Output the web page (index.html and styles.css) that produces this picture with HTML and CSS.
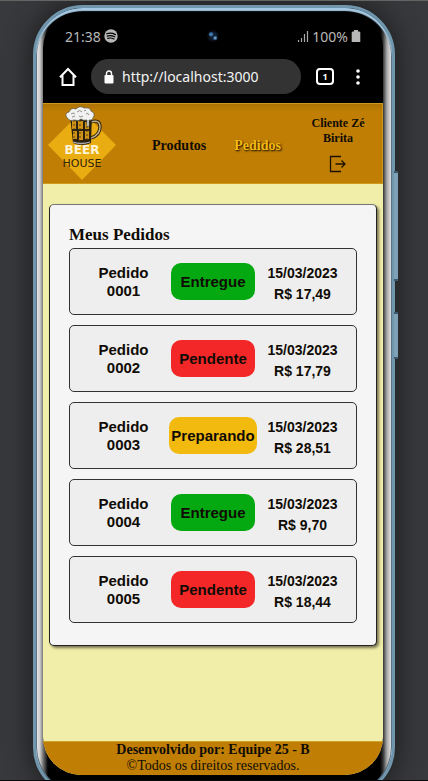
FILE: index.html
```html
<!DOCTYPE html>
<html lang="pt-BR">
<head>
<meta charset="utf-8">
<meta name="viewport" content="width=device-width, initial-scale=1">
<title>Beer House - Meus Pedidos</title>
<link rel="stylesheet" href="styles.css">
</head>
<body>
<div class="stage">
  <div class="phone">
    <span class="side-key volume"></span>
    <span class="side-key power"></span>
    <div class="screen">
      <div class="status">
        <span class="clock">21:38
          <svg width="14" height="14" viewBox="0 0 14 14"><circle cx="7" cy="7" r="6.7" fill="#b8b8b8"/><path d="M2.7 4.8Q7 3.3 11.5 5.6M3.2 7.1Q7 6 10.7 7.8M3.7 9.4Q7 8.4 10 10" fill="none" stroke="#000" stroke-width="1.2" stroke-linecap="round"/></svg>
        </span>
        <svg class="camera" width="14" height="14" viewBox="0 0 14 14"><circle cx="7" cy="7" r="6" fill="#080c12"/><circle cx="7" cy="7" r="4" fill="#102034"/><circle cx="5" cy="5.3" r="2" fill="#3f78ab"/><circle cx="9.2" cy="9" r="2" fill="#3a6d9c"/><circle cx="9" cy="9" r=".8" fill="#b0d0ee"/></svg>
        <span class="signal">
          <svg width="12" height="12" viewBox="0 0 12 12"><path d="M1.5 12V10M4.5 12V8M7.5 12V4M10.5 12V1" stroke="#aaa" stroke-width="1.2"/></svg>
          100%
          <svg width="10" height="12" viewBox="0 0 10 12"><path d="M3 0h4v1.5h1.5l.8.8V12H.7V2.3l.8-.8H3z" fill="#b8b8b8"/></svg>
        </span>
      </div>
      <div class="browser">
        <button class="tool" aria-label="Início"><svg width="18" height="20" viewBox="0 0 18 20"><path d="M1 10.2 9 2l8 8.2M3.5 8.5V18h11V8.5" fill="none" stroke="#fff" stroke-width="2"/></svg></button>
        <label class="address">
          <svg width="10" height="14" viewBox="0 0 10 14"><rect x=".5" y="5" width="9" height="8.5" rx="1" fill="#fff"/><path d="M2.5 6V3.5a2.5 2.5 0 0 1 5 0V6" fill="none" stroke="#fff" stroke-width="1.4"/></svg>
          <input type="text" aria-label="Endereço" value="http://localhost:3000">
        </label>
        <button class="tool tabs" aria-label="Abas">1</button>
        <button class="tool menu" aria-label="Menu"><svg width="6" height="18" viewBox="0 0 6 18"><g fill="#fff"><circle cx="3" cy="3" r="1.8"/><circle cx="3" cy="9" r="1.8"/><circle cx="3" cy="15" r="1.8"/></g></svg></button>
      </div>
      <div class="app">
        <header class="top">
          <svg class="logo" width="70" height="76" viewBox="0 0 70 76" role="img" aria-label="Beer House">
            <path d="M35 5 69 39 35 74 1 39z" fill="#e9ad12"/>
            <path d="M44 16q9-3 9 5t-9 11" fill="none" stroke="#33250f" stroke-width="3.4"/>
            <path d="M44 16q9-3 9 5t-9 11" fill="none" stroke="#c4b48c" stroke-width="1.4"/>
            <path d="M23 10h22l-1 27q-9 4-18 0z" fill="#2c210f"/>
            <path d="M25 15h4v8h-4zM31 15h5v8h-5zM38 16h4v7h-4zM26 25h4v8h-4zM32 25h4v9h-4zM38 25h4v8h-4z" fill="#cf9216"/>
            <path d="M27 14v20M33 14v21M40 16v18" stroke="#5b410e" stroke-width="1" stroke-dasharray="2 2"/>
            <path d="M26 36q8 3 17 0" fill="none" stroke="#aaa" stroke-width="1.3"/>
            <path d="M20 12q-3-5 2-6 2-5 7-3 4-4 8-1 6-1 7 3 5 2 2 7-1 3-4 2v6q-2 2-2-1v-5q-4 1-6-1-3 3-6 1-5 2-8-2z" fill="#f2f2f2" stroke="#55503f" stroke-width=".7"/>
            <path d="M24 8q2-2 4 0M30 6q3-3 5 0M32 10q2 2 4 0M39 8q2-2 3 1M25 11l3-1M37 5l2-1" fill="none" stroke="#77736a" stroke-width=".8"/>
            <text class="logo-beer" x="35" y="48" text-anchor="middle">BEER</text>
            <text class="logo-house" x="35" y="61" text-anchor="middle">HOUSE</text>
          </svg>
          <nav class="links">
            <a href="#produtos">Produtos</a>
            <a class="active" href="#pedidos">Pedidos</a>
          </nav>
          <div class="user">
            <span>Cliente Zé Birita</span>
            <button class="logout" aria-label="Sair"><svg width="18" height="18" viewBox="0 0 18 18"><path d="M12 1.500H1.500v15H12M6.500 9H16M12.500 5.500 16 9l-3.500 3.500" fill="none" stroke="#1c1200" stroke-width="1.300"/></svg></button>
          </div>
        </header>
        <main class="content">
          <section class="orders">
            <h1>Meus Pedidos</h1>
            <ul>
              <li><p class="number">Pedido 0001</p><span class="badge done">Entregue</span><p class="info">15/03/2023<br>R$ 17,49</p></li>
              <li><p class="number">Pedido 0002</p><span class="badge pending">Pendente</span><p class="info">15/03/2023<br>R$ 17,79</p></li>
              <li><p class="number">Pedido 0003</p><span class="badge preparing">Preparando</span><p class="info">15/03/2023<br>R$ 28,51</p></li>
              <li><p class="number">Pedido 0004</p><span class="badge done">Entregue</span><p class="info">15/03/2023<br>R$ 9,70</p></li>
              <li><p class="number">Pedido 0005</p><span class="badge pending">Pendente</span><p class="info">15/03/2023<br>R$ 18,44</p></li>
            </ul>
          </section>
        </main>
        <footer class="bottom"><strong>Desenvolvido por: Equipe 25 - B</strong><br>©Todos os direitos reservados.</footer>
      </div>
    </div>
  </div>
</div>
</body>
</html>
```
FILE: styles.css
```css
* {
  box-sizing: border-box;
}

body,
h1,
p,
ul {
  margin: 0;
  padding: 0;
}

button {
  padding: 0;
  border: 0;
  background: none;
  color: inherit;
}

svg {
  display: block;
  flex: none;
}

.stage {
  display: flex;
  flex-direction: column;
  min-height: 100vh;
  padding: 3px 33px 0;
  overflow: hidden;
  border-top: 1px solid #626561;
  border-bottom: 1px solid #090909;
  background: #38393c;
}

.phone {
  position: relative;
  display: flex;
  flex: 1;
  margin: 1px 0 -17px;
  padding: 4px 9px 19px 7px;
  border: 3px solid #7096ae;
  border-radius: 50px;
  background: linear-gradient(90deg, #eee, #ccc 4px, #777 7px, #000 12px, #000 calc(100% - 12px), #333 calc(100% - 9px), #aaa calc(100% - 5px), #eee);
  box-shadow: inset 0 3px 1px #a5c9e2, inset 0 0 0 1px #52697a, 0 0 24px 4px #202123;
}

.side-key {
  position: absolute;
  right: -6px;
  width: 4px;
  border: solid #3d596b;
  border-width: 2px 0;
  background: #7fa1b8;
}

.volume {
  top: 163px;
  height: 110px;
}

.power {
  top: 304px;
  height: 47px;
}

.screen {
  display: flex;
  flex: 1;
  flex-direction: column;
  min-width: 0;
  border-radius: 36px 36px 38px 38px;
  overflow: hidden;
  background: #000;
}

.status {
  display: grid;
  grid-template-columns: 1fr auto 1fr;
  align-items: center;
  height: 48px;
  padding: 0 22px;
  color: #b8b8b8;
  font: 14px "Noto Sans", sans-serif;
}

.clock,
.signal {
  display: flex;
  align-items: center;
  gap: 3px;
}

.signal {
  justify-content: flex-end;
}

.browser {
  display: flex;
  align-items: center;
  height: 43px;
  padding: 0 16px 10px;
  color: #fff;
}

.tool {
  display: grid;
  place-items: center;
  min-width: 18px;
}

.address {
  display: flex;
  flex: 1;
  align-items: center;
  gap: 8px;
  height: 35px;
  min-width: 0;
  margin: 0 15px 0 14px;
  padding: 0 13px;
  border-radius: 18px;
  background: #333;
}

.address input {
  flex: 1;
  min-width: 0;
  padding: 0;
  border: 0;
  outline: 0;
  background: none;
  color: #f4f4f4;
  font: 14px "Noto Sans", sans-serif;
}

.tabs {
  height: 17px;
  border: 2px solid #fff;
  border-radius: 4px;
  font: bold 9px "Noto Sans", sans-serif;
}

.menu {
  margin-left: 15px;
}

.app {
  display: flex;
  flex: 1;
  flex-direction: column;
  background: #f1eeaa;
  color: #100c05;
  font-family: "Liberation Serif", serif;
}

.top {
  display: flex;
  align-items: center;
  min-height: 81px;
  padding: 0 14px 0 4px;
  border: solid #cc9b1d;
  border-width: 1px 1px 1px 0;
  background: linear-gradient(#ae7303, #c07f04 8px);
}

.logo-beer {
  fill: #fff4d8;
  font: bold 12px "DejaVu Sans", sans-serif;
}

.logo-house {
  fill: #33230a;
  font: 11px "DejaVu Sans", sans-serif;
}

.links {
  display: flex;
  flex: 1;
  justify-content: center;
  gap: 28px;
  padding: 4px 0 0 8px;
  font-size: 14px;
  font-weight: bold;
}

.links a {
  color: inherit;
  text-decoration: none;
}

.links .active {
  color: #f2b90f;
  text-shadow: 1px 1px 2px #000;
}

.user {
  display: flex;
  flex-direction: column;
  align-items: center;
  gap: 9px;
  width: 60px;
  padding-top: 1px;
  font-size: 12px;
  font-weight: bold;
  line-height: 15px;
  text-align: center;
}

.content {
  flex: 1;
  padding: 20px 6px;
}

.orders {
  padding: 20px 19px 22px;
  border: 1px solid #222;
  border-top-color: #777;
  border-radius: 5px;
  background: #f5f5f5;
  box-shadow: 2px 2px 3px #77734f;
}

.orders h1 {
  margin-bottom: 3px;
  font-size: 17px;
  line-height: 20px;
}

.orders ul {
  display: grid;
  gap: 10px;
  list-style: none;
}

.orders li {
  display: grid;
  grid-template-columns: 1fr 88px 1fr;
  align-items: center;
  justify-items: center;
  min-height: 67px;
  padding: 0 8px;
  border: 1px solid #333;
  border-radius: 5px;
  background: #eee;
  font: bold 15px/18px "Liberation Sans", sans-serif;
  text-align: center;
}

.number {
  width: min-content;
}

.badge {
  min-width: 84px;
  padding: 10px 2px;
  border-radius: 10px;
  line-height: 17px;
}

.done {
  background: #04a810;
}

.pending {
  background: #f32727;
}

.preparing {
  background: #f2b90f;
}

.info {
  padding-top: 4px;
  font-size: 14px;
  line-height: 21px;
}

.bottom {
  padding-bottom: 1px;
  border-top: 1px solid #cfa02a;
  background: #c07f04;
  font-size: 14px;
  line-height: 16px;
  text-align: center;
}
```
